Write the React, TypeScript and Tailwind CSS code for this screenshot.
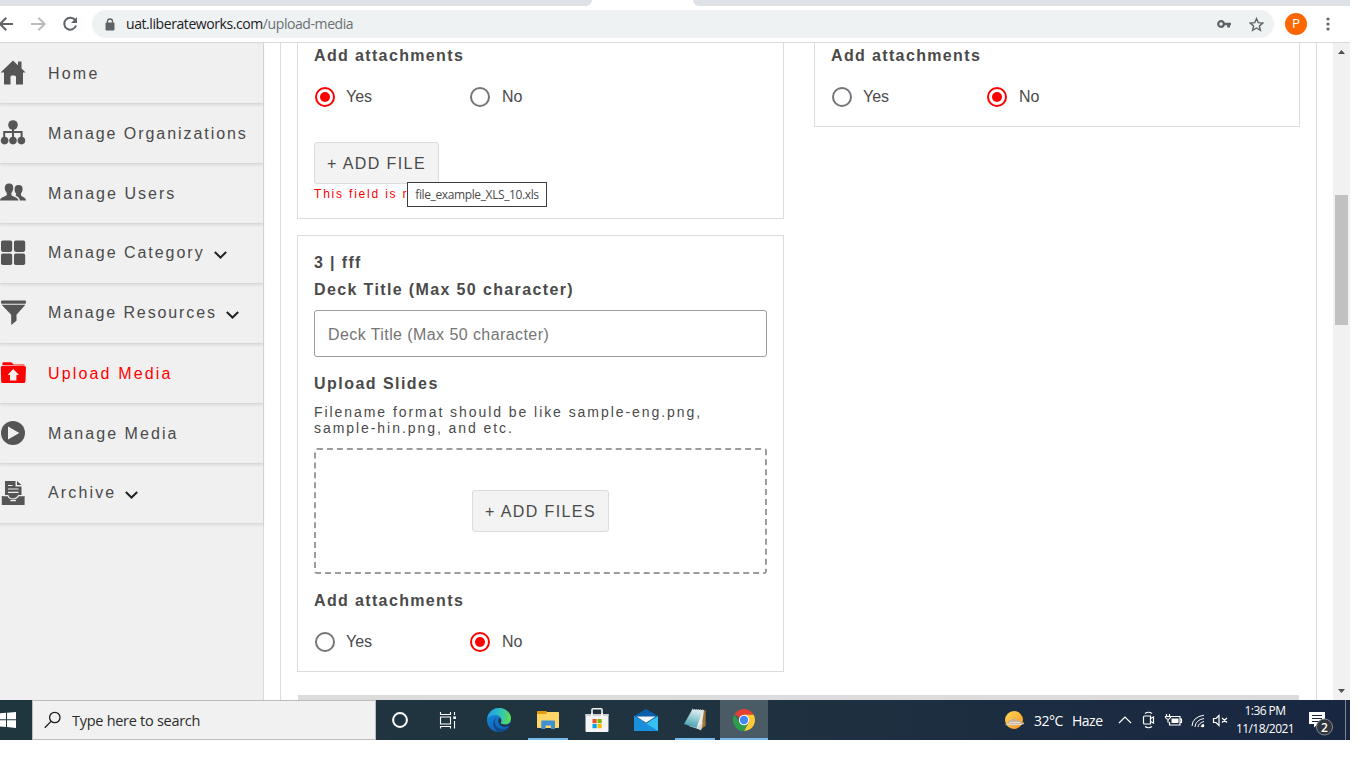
import type { ReactNode } from "react";

const label = "font-['Liberation_Sans',Arial,sans-serif] whitespace-nowrap";
const segoe = "font-['Open_Sans','Noto_Sans',sans-serif] whitespace-nowrap";

function Chevron() {
  return (
    <svg width="13" height="8" viewBox="0 0 13 8" fill="none" stroke="#222" strokeWidth="2">
      <path d="M0.8 1 L6.5 6.5 L12.2 1" />
    </svg>
  );
}

const icons: Record<string, ReactNode> = {
  home: (
    <g fill="#555">
      <path d="M13 0.5 L18 5.2 V1.5 H21.5 V8.6 L25.6 12.6 H23 V24.5 H16 V17 Q16 15.5 14.5 15.5 H11.8 Q10.5 15.5 10.5 17 V24.5 H4 V12.6 H0.6 Z" />
    </g>
  ),
  org: (
    <g fill="#555">
      <circle cx="13" cy="5" r="4.8" />
      <path d="M12 9 H14 V11 H22.6 V17 H20.6 V13 H14 V17 H12 V13 H5.2 V17 H3.2 V11 H12 Z" />
      <circle cx="4.6" cy="20.6" r="3.8" />
      <circle cx="13" cy="20.6" r="3.8" />
      <circle cx="21.4" cy="20.6" r="3.8" />
    </g>
  ),
  users: (
    <g fill="#555">
      <path d="M9 3.5 C12 3.5 13.6 5.4 13.2 8.5 C13 10.8 12 12 11.4 13 V15 C13 17 18 17.2 18.6 20.6 H0 C0 17 5 17.2 6.8 15 V13 C6 12 5 10.8 4.8 8.5 C4.6 5.4 6.2 3.5 9 3.5 Z" />
      <path d="M18.5 5 C21.5 5 22.8 6.6 22.6 9.2 C22.4 11.6 21.6 12.6 21 13.4 V15.2 C22.4 17.2 26 17.4 26 20.6 H20 C19.6 17.8 17.4 16.4 15.2 15.6 C16.2 15 16.4 14.4 16 13.4 C15.2 12.6 14.6 11.4 14.6 9.2 C14.6 6.6 15.8 5 18.5 5 Z" />
    </g>
  ),
  grid: (
    <g fill="#555">
      <rect x="1" y="0.5" width="11.2" height="11.4" rx="1.8" />
      <rect x="14" y="0.5" width="11.2" height="11.4" rx="1.8" />
      <rect x="1" y="13.6" width="11.2" height="11.4" rx="1.8" />
      <rect x="14" y="13.6" width="11.2" height="11.4" rx="1.8" />
    </g>
  ),
  funnel: (
    <g fill="#555">
      <rect x="1" y="0.5" width="25" height="3.2" rx="1" />
      <path d="M1.6 4.8 H25.4 L16.5 14.8 V20.8 L11.2 25 V14.8 Z" />
    </g>
  ),
  upload: (
    <g>
      <path fill="#f00" d="M2.4 5.2 V3.4 Q2.4 2.2 3.6 2.2 H11.4 L13.6 4.6 H23.6 Q24.6 4.6 24.6 5.6 Z" />
      <path fill="#f00" d="M2.2 6 H24.4 Q26 6 26 7.5 L25.4 21.4 Q25.3 23 23.8 23 H2.6 Q1.2 23 1.2 21.4 L0.8 7.5 Q0.8 6 2.2 6 Z" />
      <path fill="#f0f0f0" d="M13.2 9 L19 15 H16.4 V20.6 H10 V15 H7.6 Z" />
    </g>
  ),
  play: (
    <g>
      <circle cx="13" cy="13" r="12" fill="#555" />
      <path d="M8 6.6 L19.4 13 L8 19.4 Z" fill="#f0f0f0" />
    </g>
  ),
  archive: (
    <g>
      <path fill="#555" d="M5 1 H15.5 V6.5 H21.5 V16 H24.6 V25 H1.8 V16 H5 Z" />
      <path fill="#555" d="M17 1 L21.5 5 H17 Z" />
      <g stroke="#f0f0f0" strokeWidth="1.2" fill="none">
        <path d="M8 5.5 H12.5 M8 9 H18.5 M8 12.3 H18.5 M3 15.6 H8 Q9 19 13 19 Q17 19 18.6 15.6 H24 M10.4 20.6 H16" />
      </g>
    </g>
  ),
};

function NavItem({ icon, text, cls, chevron, active }: { icon: string; text: string; cls: string; chevron?: boolean; active?: boolean }) {
  return (
    <div className="flex h-[60px] items-center border-b border-[#dcdcdc] shadow-[0_1px_3px_rgba(0,0,0,0.1)]">
      <svg className="mb-px w-[27px] shrink-0" height="26" viewBox="0 0 27 26">{icons[icon]}</svg>
      <span className={`${label} ml-[21px] text-[16px] leading-[20px] ${cls} ${active ? "text-[#f00]" : "text-[#4a4a4a]"} ${chevron ? "mb-[2px]" : ""}`}>{text}</span>
      {chevron && <span className="ml-[9px] mt-[3px]"><Chevron /></span>}
    </div>
  );
}

function Radio({ text, on, gap = "ml-[11px]" }: { text: string; on?: boolean; gap?: string }) {
  return (
    <div className="flex h-5 w-[155px] items-center">
      <svg className="ml-[1px] shrink-0" width="20" height="20" viewBox="0 0 20 20">
        <circle cx="10" cy="10" r="9" fill="none" stroke={on ? "#f00" : "#757575"} strokeWidth="2" />
        {on && <circle cx="10" cy="10" r="5" fill="#f00" />}
      </svg>
      <span className={`${label} ${gap} text-[16px] leading-[20px] text-[#4a4a4a]`}>{text}</span>
    </div>
  );
}

function Attachments({ yes }: { yes?: boolean }) {
  return (
    <div>
      <div className={`${label} h-5 text-[16px] font-bold leading-[20px] tracking-[1.36px] text-[#4a4a4a]`}>Add attachments</div>
      <div className="mt-[21px] flex">
        <Radio text="Yes" on={yes} />
        <Radio text="No" on={!yes} gap="ml-[12px]" />
      </div>
    </div>
  );
}

function AddButton({ children, width }: { children: string; width: string }) {
  return (
    <button className={`${label} ${width} h-[42px] rounded-[3px] border border-[#dcdcdc] bg-[#f3f3f3] pt-[2px] text-[16px] tracking-[1.4px] text-[#4a4a4a]`}>{children}</button>
  );
}

function BrowserBar() {
  return (
    <div className="h-[43px] shrink-0 border-b border-[#d9dbde] bg-white">
      <div className="flex h-[6px] justify-between">
        <div className="w-[592px] rounded-br-[8px] bg-[#dee1e6]" />
        <div className="w-[657px] rounded-bl-[8px] bg-[#dee1e6]" />
      </div>
      <div className="flex h-9 items-center">
        <svg width="92" height="36" viewBox="0 0 92 36" fill="none" strokeWidth="2">
          <path d="M13 18 H0 M6.3 11.7 L0 18 L6.3 24.3" stroke="#5f6368" />
          <path d="M31 18 H44 M38.4 11.7 L44.6 18 L38.4 24.3" stroke="#b9bcbf" />
          <path d="M75.2 14.2 A6 6 0 1 0 76 19.5" stroke="#5f6368" />
          <path d="M77 11 V17 H71 Z" fill="#5f6368" />
        </svg>
        <div className="flex h-7 w-[1182px] items-center rounded-full bg-[#eff2f3] pl-[13px]">
          <svg width="10" height="13" viewBox="0 0 10 13">
            <rect x="0.5" y="4.5" width="9" height="8" rx="1" fill="#5f6368" />
            <path d="M2.5 5 V3.5 A2.5 2.5 0 0 1 7.5 3.5 V5" fill="none" stroke="#5f6368" strokeWidth="1.3" />
          </svg>
          <span className={`${segoe} ml-[11px] text-[14px] leading-5 tracking-[-0.42px] text-[#202124]`}>
            uat.liberateworks.com<span className="text-[#6b7075]">/upload-media</span>
          </span>
          <svg className="ml-auto" width="14" height="8" viewBox="0 0 14 8">
            <circle cx="4" cy="4" r="2.8" fill="none" stroke="#5f6368" strokeWidth="2.2" />
            <path d="M7 2.8 H14 V5.2 H13 V7.5 H10.2 V5.2 H7 Z" fill="#5f6368" />
          </svg>
          <svg className="ml-[18px] mr-[10px]" width="15" height="15" viewBox="0 0 15 15" fill="none" stroke="#5f6368" strokeWidth="1.4">
            <path d="M7.5 1.6 L9.3 5.7 L13.7 6.1 L10.4 9 L11.4 13.3 L7.5 11 L3.6 13.3 L4.6 9 L1.3 6.1 L5.7 5.7 Z" />
          </svg>
        </div>
        <div className="ml-[11px] flex h-[22px] w-[22px] items-center justify-center rounded-full bg-[#ff6600] font-['Roboto',sans-serif] text-[12px] text-white">P</div>
        <svg className="ml-[19px]" width="4" height="14" viewBox="0 0 4 14" fill="#5f6368">
          <circle cx="2" cy="2" r="1.6" /><circle cx="2" cy="7" r="1.6" /><circle cx="2" cy="12" r="1.6" />
        </svg>
      </div>
    </div>
  );
}

function Task({ children, bar, active }: { children: ReactNode; bar?: boolean; active?: boolean }) {
  return (
    <div className={`flex h-10 w-12 flex-col items-center ${active ? "bg-[#4b5b66]" : ""}`}>
      <div className="flex h-[38px] items-center pt-[2px]">{children}</div>
      {(bar || active) && <div className={`h-[2px] bg-[#76b9ed] ${active ? "w-12" : "w-10"}`} />}
    </div>
  );
}

function Taskbar() {
  return (
    <div className="flex h-10 shrink-0 items-center bg-linear-to-r from-[#20363e] via-[#203340] to-[#192641]">
      <svg width="32" height="40" viewBox="0 0 32 40" fill="#fff">
        <path d="M0 13.3 L6 12.8 V19.2 H0 Z M7 12.7 L16 12 V19.2 H7 Z M0 20.2 H6 V27 L0 26.4 Z M7 20.2 H16 V28 L7 27.1 Z" />
      </svg>
      <div className="flex h-10 w-[344px] items-center border border-[#bdbdbd] bg-[#f1f1f1] pl-[11px]">
        <svg width="18" height="18" viewBox="0 0 18 18" fill="none" stroke="#1b1b1b" strokeWidth="1.3">
          <circle cx="10.8" cy="6.5" r="5.2" /><path d="M7 10.4 L0.8 16.8" />
        </svg>
        <span className={`${segoe} ml-[10px] pt-[2px] text-[14.5px] leading-5 tracking-[-0.28px] text-[#2b2b2b]`}>Type here to search</span>
      </div>
      <Task>
        <svg width="16" height="16" viewBox="0 0 16 16"><circle cx="8" cy="8" r="6.9" fill="none" stroke="#fff" strokeWidth="2" /></svg>
      </Task>
      <svg width="46" height="40" viewBox="-4 0 46 40" fill="none" stroke="#fff" strokeWidth="1.1">
        <path d="M12.5 12 V14.5 H22.5 V12 M12.5 17 H22.5 V24 H12.5 Z M12.5 28.5 V26.5 H22.5 V28.5 M26.5 12 V15 M26.5 21 V28.5" />
        <rect x="25.3" y="16.4" width="2.6" height="2.6" fill="#fff" stroke="none" />
      </svg>
      <div className="ml-[5px] flex gap-px">
        <Task>
          <svg width="24" height="24" viewBox="0 0 24 24">
            <defs>
              <linearGradient id="eg" x1="0" x2="1" y1="0.4" y2="0.5"><stop offset="0" stopColor="#1b9de8" /><stop offset="0.6" stopColor="#35c6b4" /><stop offset="1" stopColor="#62dd4d" /></linearGradient>
              <linearGradient id="eb" x1="0" x2="0.6" y1="0" y2="1"><stop offset="0" stopColor="#1a90dd" /><stop offset="1" stopColor="#0d5eb8" /></linearGradient>
            </defs>
            <circle cx="12" cy="12" r="12" fill="url(#eb)" />
            <path d="M0.3 11 C1 4.5 6 0 12 0 C18.5 0 24 4.6 24 10.5 C24 14.5 21 16.5 18 16.5 C15 16.5 13.2 15.5 13.8 14.5 C16 11 13 7 8.5 7 C5 7 2 8.5 0.3 11 Z" fill="url(#eg)" />
            <path d="M9.5 9.6 C6 13 8 21.5 16 21.2 C18.5 21.1 21 20 22 18.5 C20 22 16 24 12 24 C6 22.5 4 13 9.5 9.6 Z" fill="#114a8b" />
            <path d="M12.3 10 C10.5 11.8 11 18.6 18 18.7 C20 18.7 21.3 18.2 22.6 17.5 L24 19 V14.5 C22 17 18 17.2 15.5 16.3 C13.5 15.6 13.4 15 14 14 C14.5 12.5 14 10.5 12.3 10 Z" fill="#20353f" />
          </svg>
        </Task>
        <Task bar>
          <svg width="22" height="20" viewBox="0 0 22 20">
            <rect x="0" y="2" width="22" height="16" rx="0.8" fill="#ffd567" />
            <path d="M0 1.5 Q0 1 1 1 H9 L10 1.8 L9 4 H0 Z" fill="#e09a0b" />
            <path d="M4.3 19 V11.5 Q4.3 10.5 5.3 10.5 H17 Q18 10.5 18 11.5 V19 H14 V15.5 H8.5 V19 Z" fill="#3d91d3" />
          </svg>
        </Task>
        <Task>
          <svg width="24" height="24" viewBox="0 0 24 24">
            <path d="M7 7 V1.5 Q7 0.8 8 0.8 H16 Q17 0.8 17 1.5 V7" fill="none" stroke="#f3f3f3" strokeWidth="1.6" />
            <path d="M0.5 6 H23.5 V23 Q23.5 24 22.5 24 H1.5 Q0.5 24 0.5 23 Z" fill="#f5f5f5" /><rect x="0.5" y="6" width="23" height="2" fill="#cfcfcf" />
            <path d="M7 8 V5 M17 8 V5" stroke="#fff" strokeWidth="1.6" />
            <rect x="7.5" y="11" width="4.2" height="4.2" fill="#f25022" /><rect x="12.5" y="11" width="4.2" height="4.2" fill="#7fba00" />
            <rect x="7.5" y="16" width="4.2" height="4.2" fill="#00a4ef" /><rect x="12.5" y="16" width="4.2" height="4.2" fill="#ffb900" />
          </svg>
        </Task>
        <Task>
          <svg width="24" height="22" viewBox="0 0 24 22">
            <path d="M0 7 L12 0 L24 7 L22 12 H2 Z" fill="#0b5ea9" />
            <path d="M0 7 L12 14.5 L24 7 V22 H0 Z" fill="#35c1f1" /><path d="M0 7 L24 22 H0 Z" fill="#1a8fdc" /><path d="M2.5 7.5 H21.5 L12 13.8 Z" fill="#f2f5f7" />
          </svg>
        </Task>
        <Task bar>
          <svg width="24" height="24" viewBox="0 0 24 24">
            <defs><linearGradient id="np" x1="0.6" x2="0.3" y1="0" y2="1"><stop offset="0" stopColor="#dcedf0" /><stop offset="0.5" stopColor="#8cc5ce" /><stop offset="1" stopColor="#3899ab" /></linearGradient></defs>
            <path d="M20 3 L22.6 2 L22.6 18 L18 21 Z" fill="#a4762f" /><path d="M9 1.500 L21 2 L18 22 L6 18 Z" fill="#e8ecec" />
            <path d="M9 2 L19.500 3 L13.500 20 L1 16 Z" fill="url(#np)" /><path d="M14 19.500 L20 14 L18 22.500 Z" fill="#d3d8da" />
            <path d="M9 1.500 L21 2.500" stroke="#c6cbcc" strokeWidth="1.500" strokeDasharray="1 1" />
          </svg>
        </Task>
        <Task active>
          <svg width="22" height="22" viewBox="0 0 22 22">
            <path d="M11 11 L1.47 5.5 A11 11 0 0 1 20.53 5.5 Z" fill="#e34133" />
            <path d="M11 5.8 H20.7 A11 11 0 0 1 11 22 L15.5 13.6 Z" fill="#fdc935" />
            <path d="M1.47 5.5 A11 11 0 0 0 11 22 L15.6 13.5 L6.4 13.6 Z" fill="#2c9e4b" />
            <circle cx="11" cy="11" r="5.2" fill="#fff" /><circle cx="11" cy="11" r="4.2" fill="#4387f4" />
          </svg>
        </Task>
      </div>
      <div className="ml-[236px] flex h-10 items-center text-white">
        <svg width="22" height="20" viewBox="0 0 22 20">
          <defs><linearGradient id="sun" x1="0" x2="1" y1="0" y2="1"><stop offset="0" stopColor="#ffd95c" /><stop offset="1" stopColor="#f7931e" /></linearGradient></defs>
          <circle cx="10" cy="10" r="9" fill="url(#sun)" />
          <path d="M4 12.500 Q4 10.500 6 10.800 Q7.500 8 10 9 Q12.500 8 14 10.500 Q17 10 17.500 12.500 H20 V14 Q17 15.500 14 15 Q10 16.500 7 15.300 H1.500 V14 Z" fill="#c9b296" />
          <path d="M5 12.500 H16 M3 14.300 H18" stroke="#eadfce" strokeWidth="1" />
        </svg>
        <span className={`${segoe} ml-[8px] w-[38px] pt-[2px] text-[14px] leading-5 tracking-[-0.5px]`}>32°C</span>
        <span className={`${segoe} w-[46px] pt-[2px] text-[14px] leading-5 tracking-[-0.5px]`}>Haze</span>
        <svg width="110" height="40" viewBox="0 0 110 40" fill="none" stroke="#fff" strokeWidth="1.2">
          <path d="M1 23 L7 17 L13 23" />
          <path d="M26.5 16 H32.5 V24 H26.5 Q25.500 24 25.500 23 V17 Q25.500 16 26.500 16 Z M32.500 18.500 L35.500 17 V23 L32.500 21.500 M27 13.500 Q30.500 11 34 13.500 M27 26.500 Q30.500 29 34 26.500" />
          <path d="M53 16.500 H62 V25 H51.500 V22 M62.500 19 H63.500 V22.500 H62.500" /><rect x="53.500" y="18.500" width="7" height="4.500" fill="#fff" stroke="none" />
          <path d="M48.500 14 V16 M51.500 14 V16 M47.500 16.500 H52.500 V17.500 Q50 21 47.500 17.500 Z M50 19 V22.500" />
          <g strokeWidth="1"><path d="M74 26 Q74.500 17 86 15.200 M77 27 Q77.500 20 86 18.500 M80 27 Q80.500 23 86 21.500 M83 27 Q83.500 25.500 86 24.500" /></g>
          <circle cx="84.800" cy="25.800" r="1.500" fill="#fff" stroke="none" />
          <path d="M95.500 18.500 H98 L101 15.500 V25.500 L98 22.500 H95.500 Z M104 18 L109 22.500 M109 18 L104 22.500" />
        </svg>
        <div className={`${segoe} ml-[6px] w-[62px] text-center text-[12px] leading-[18px] tracking-[-0.55px]`}>
          <div>1:36 PM</div>
          <div>11/18/2021</div>
        </div>
        <svg className="ml-[12px]" width="26" height="40" viewBox="0 0 26 40">
          <path d="M1 12 H17 V24 H10 L6 27.5 V24 H1 Z" fill="#fff" /><path d="M4 15.5 H14 M4 18.5 H14 M4 21.5 H11" stroke="#1b2842" />
          <circle cx="16.5" cy="27" r="8" fill="#30343b" stroke="#85898f" />
          <text x="16.5" y="31.5" textAnchor="middle" fontFamily="Open Sans" fontSize="12" fontWeight="600" fill="#fff">2</text>
        </svg>
      </div>
      <div className="ml-auto h-10 w-[5px] border-l border-[#7e8694]" />
    </div>
  );
}

export default function App() {
  return (
    <div className="h-[768px] w-[1366px] overflow-hidden bg-white">
      <div className="flex h-[740px] w-[1350px] flex-col">
        <BrowserBar />
        <div className="flex h-[657px]">
          <nav className="w-[264px] shrink-0 border-r border-[#d9d9d9] bg-[#f0f0f0] pt-px">
            <NavItem icon="home" text="Home" cls="tracking-[2.2px]" />
            <NavItem icon="org" text="Manage Organizations" cls="tracking-[1.94px]" />
            <NavItem icon="users" text="Manage Users" cls="tracking-[2.02px]" />
            <NavItem icon="grid" text="Manage Category" cls="tracking-[1.96px]" chevron />
            <NavItem icon="funnel" text="Manage Resources" cls="tracking-[1.88px]" chevron />
            <NavItem icon="upload" text="Upload Media" cls="tracking-[2.15px]" active />
            <NavItem icon="play" text="Manage Media" cls="tracking-[2.05px]" />
            <NavItem icon="archive" text="Archive" cls="tracking-[2.15px]" chevron />
          </nav>
          <main className="flex flex-1 px-4">
            <div className="flex w-[1037px] flex-col border-x border-[#dcdcdc] px-4">
              <div className="flex items-start justify-between">
                <div className="w-[487px]">
                  <section className="h-[176px] border border-t-0 border-[#dcdcdc] pl-4 pt-[3px]">
                    <Attachments yes />
                    <div className="mt-[35px] flex flex-col items-start">
                      <AddButton width="w-[125px]">+ ADD FILE</AddButton>
                      <div className="relative">
                        <div className={`${label} mt-[2px] text-[12px] leading-[16px] tracking-[1.8px] text-[#f00]`}>This field is required</div>
                        <div className={`${segoe} absolute left-[93px] top-[-2px] flex h-[25px] w-[140px] items-center justify-center border border-[#3c3c3c] bg-white pt-px text-[12px] tracking-[-0.38px] text-[#4a4a4a]`}>file_example_XLS_10.xls</div>
                      </div>
                    </div>
                  </section>
                  <section className={`${label} mt-4 h-[437px] border border-[#dcdcdc] px-4 pt-[17px] text-[#4a4a4a]`}>
                    <div className="h-[27px] text-[16px] font-bold leading-[20px] tracking-[1.36px]">3 | fff</div>
                    <div className="h-[30px] text-[16px] font-bold leading-[20px] tracking-[1.37px]">Deck Title (Max 50 character)</div>
                    <input className="block h-[47px] w-[453px] rounded-[3px] border border-[#9c9c9c] px-[13px] pt-[2px] text-[16px] tracking-[0.42px] placeholder:text-[#757575]" placeholder="Deck Title (Max 50 character)" />
                    <div className="mt-[17px] h-[30px] text-[16px] font-bold leading-[20px] tracking-[1.46px]">Upload Slides</div>
                    <div className="h-[44px] text-[14px] leading-[16px] tracking-[1.94px]">Filename format should be like sample-eng.png,<br />sample-hin.png, and etc.</div>
                    <div className="flex h-[126px] w-[453px] items-center justify-center rounded-[3px] border-2 border-dashed border-[#9c9c9c]">
                      <AddButton width="w-[137px]">+ ADD FILES</AddButton>
                    </div>
                    <div className="mt-[17px]"><Attachments /></div>
                  </section>
                </div>
                <section className="h-[84px] w-[486px] border border-t-0 border-[#dcdcdc] pl-4 pt-[3px]">
                  <Attachments />
                </section>
              </div>
              <div className="mx-px mt-auto h-[5px] bg-[#dcdcdc]" />
            </div>
          </main>
          <div className="flex w-[17px] flex-col items-center bg-[#f1f1f1] pb-[7px] pt-[7px]">
            <svg width="7" height="4" viewBox="0 0 7 4"><path d="M0 4 L3.5 0 L7 4 Z" fill="#505050" /></svg>
            <div className="mt-[141px] h-[130px] w-[13px] bg-[#c1c1c1]" />
            <svg className="mt-auto" width="7" height="4" viewBox="0 0 7 4"><path d="M0 0 L3.5 4 L7 0 Z" fill="#505050" /></svg>
          </div>
        </div>
        <Taskbar />
      </div>
    </div>
  );
}
